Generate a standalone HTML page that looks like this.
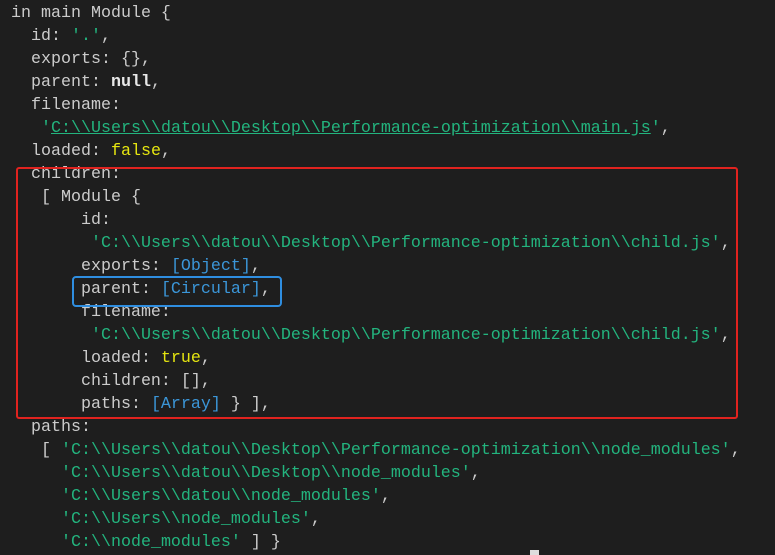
<!DOCTYPE html>
<html><head><meta charset="utf-8"><style>
html,body{margin:0;padding:0;background:#1e1e1e;width:775px;height:555px;overflow:hidden;position:relative}
pre{margin:0;position:absolute;left:11px;top:2px;font-family:"Liberation Mono",monospace;font-size:16.67px;line-height:23px;color:#cccccc;white-space:pre}
.s{color:#23b47e}.u{text-decoration:underline}.b{color:#3b96d8}.y{color:#e5e510}.w{color:#e8e8e8;font-weight:bold}
.red{position:absolute;left:16px;top:167px;width:718px;height:248px;border:2px solid #e0231f;border-radius:3px}
.blue{position:absolute;left:72px;top:276px;width:206px;height:27px;border:2px solid #2f8ee0;border-radius:4px}
.cur{position:absolute;left:530px;top:550px;width:9px;height:5px;background:#ddd}
</style></head><body>
<pre>in main Module {
  id: <span class="s">'.'</span>,
  exports: {},
  parent: <span class="w">null</span>,
  filename:
   <span class="s">'<span class="u">C:\\Users\\datou\\Desktop\\Performance-optimization\\main.js</span>'</span>,
  loaded: <span class="y">false</span>,
  children:
   [ Module {
       id:
        <span class="s">'C:\\Users\\datou\\Desktop\\Performance-optimization\\child.js'</span>,
       exports: <span class="b">[Object]</span>,
       parent: <span class="b">[Circular]</span>,
       filename:
        <span class="s">'C:\\Users\\datou\\Desktop\\Performance-optimization\\child.js'</span>,
       loaded: <span class="y">true</span>,
       children: [],
       paths: <span class="b">[Array]</span> } ],
  paths:
   [ <span class="s">'C:\\Users\\datou\\Desktop\\Performance-optimization\\node_modules'</span>,
     <span class="s">'C:\\Users\\datou\\Desktop\\node_modules'</span>,
     <span class="s">'C:\\Users\\datou\\node_modules'</span>,
     <span class="s">'C:\\Users\\node_modules'</span>,
     <span class="s">'C:\\node_modules'</span> ] }</pre>
<div class="red"></div>
<div class="blue"></div>
<div class="cur"></div>
</body></html>
